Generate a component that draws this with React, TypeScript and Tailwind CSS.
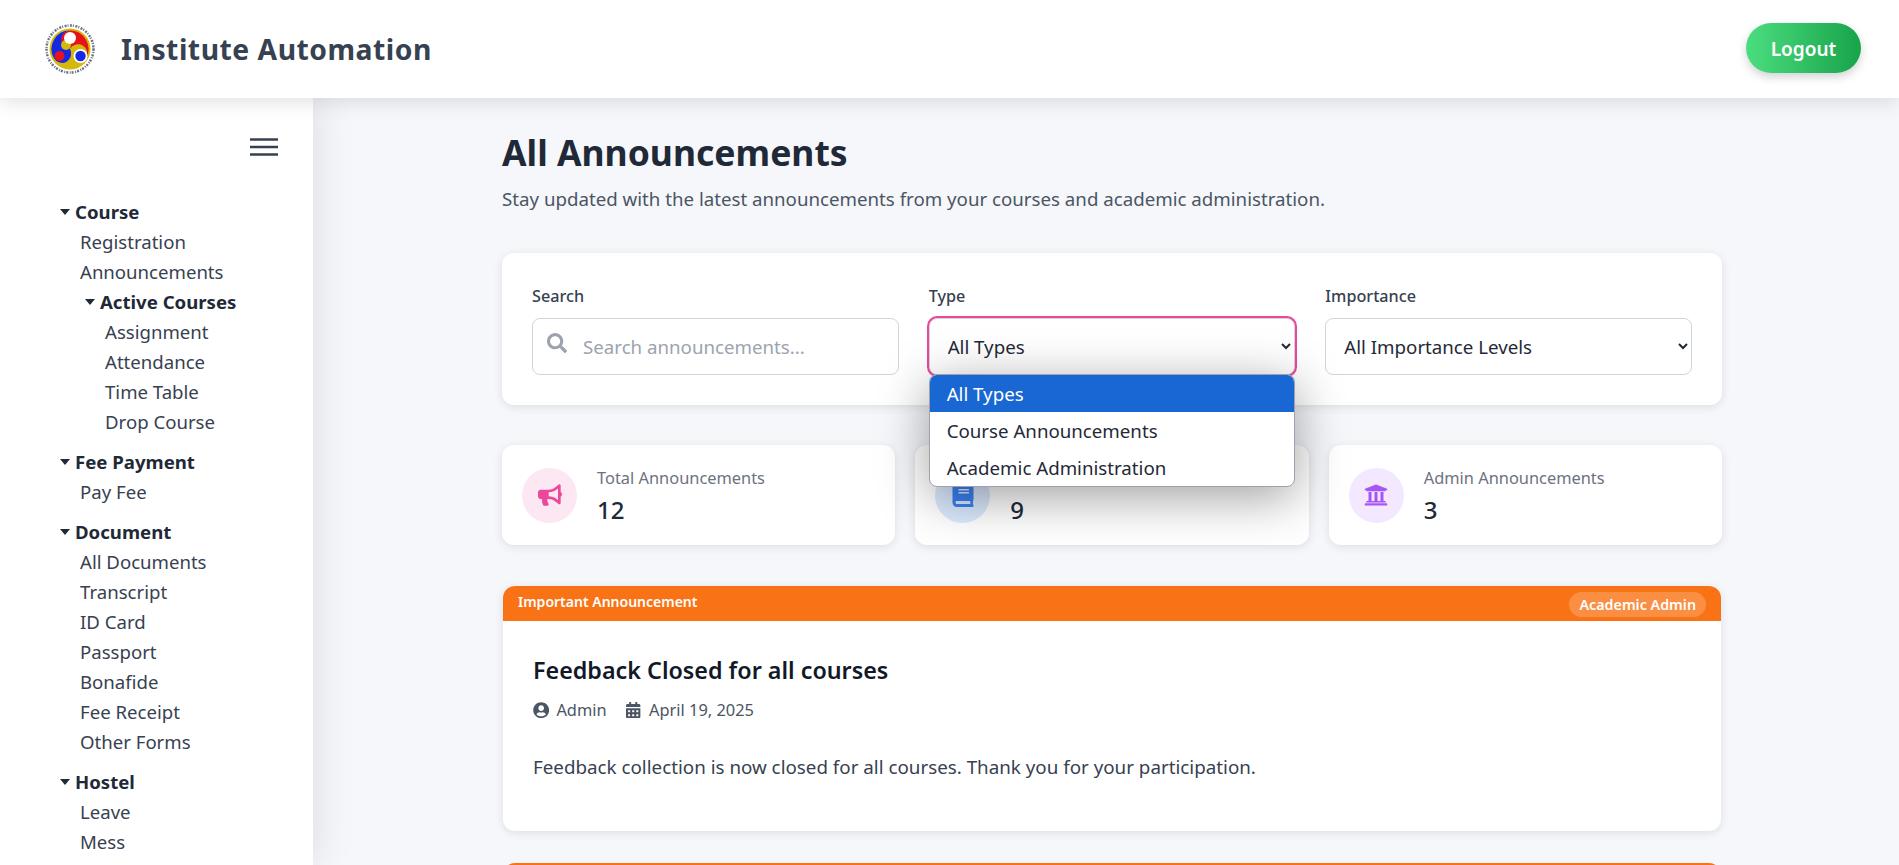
import { FaBook, FaBullhorn, FaCalendarAlt, FaSearch, FaUniversity, FaUserCircle } from 'react-icons/fa';

const fieldClass =
  'h-[57px] w-full rounded-lg border border-[#d1d5db] bg-white pl-[14px] pr-1 text-[18.7px] text-[#1f2937] outline-none';

const labelClass = 'mb-[9px] block text-[16.2px] font-medium leading-[26px] text-[#374151]';

const Caret = () => (
  <svg width="10" height="6" viewBox="0 0 10 6" className="shrink-0 fill-[#1f2937]">
    <path d="M0 0h10L5 6z" />
  </svg>
);

const blade = 'M0-18.500A18.500 18.500 0 0 1 16-9.250 18.500 18.500 0 0 1 16 9.250A9.250 9.250 0 0 0 0 0A9.250 9.250 0 0 1 0-18.500Z';

const Logo = () => (
  <svg width="50" height="52" viewBox="-25 -26 50 52">
    <circle r="23.500" fill="#fff" stroke="#6b7280" strokeWidth="2.500" strokeDasharray="2 1 1 1.500" />
    <circle r="20.500" fill="#d4b90c" />
    <path d={blade} fill="#e8121a" />
    <path d={blade} fill="#d4b90c" transform="rotate(120)" />
    <path d={blade} fill="#1428e6" transform="rotate(240)" />
    <circle cx="-4" cy="-4" r="5" fill="#d4b90c" />
    <circle cy="-11" r="6" fill="#fff" />
    <circle cx="-10.500" cy="7" r="5" fill="#e8121a" />
    <circle cx="10.500" cy="7" r="7" fill="#fff" />
    <circle cx="10.500" cy="7" r="5.200" fill="#1428e6" />
  </svg>
);

const menu = [
  { title: 'Course', items: ['Registration', 'Announcements'], sub: { title: 'Active Courses', items: ['Assignment', 'Attendance', 'Time Table', 'Drop Course'] } },
  { title: 'Fee Payment', items: ['Pay Fee'] },
  { title: 'Document', items: ['All Documents', 'Transcript', 'ID Card', 'Passport', 'Bonafide', 'Fee Receipt', 'Other Forms'] },
  { title: 'Hostel', items: ['Leave', 'Mess', 'Transfer'] },
];

const Sidebar = () => (
  <aside className="relative z-10 w-[313px] shrink-0 bg-white pl-[60px] shadow-[0_0_40px_rgba(0,0,0,0.12)]">
    <div className="flex justify-end pr-[35px] pt-[40px]">
      <svg width="28" height="18" viewBox="0 0 28 18" className="stroke-[#374151]" strokeWidth="2.400">
        <path d="M0 1.500h28M0 9h28M0 16.500h28" />
      </svg>
    </div>
    <nav className="mt-[41px] flex flex-col gap-[10px] text-[18.6px] leading-[30px]">
      {menu.map((group) => (
        <div key={group.title}>
          <div className="flex items-center gap-[5px] font-bold text-[#1f2937]">
            <Caret />
            <span>{group.title}</span>
          </div>
          <div className="pl-[20px] text-[#374151]">
            {group.items.map((item) => (
              <div key={item}>{item}</div>
            ))}
            {group.sub && (
              <div>
                <div className="flex items-center gap-[5px] pl-[5px] font-bold text-[#1f2937]">
                  <Caret />
                  <span>{group.sub.title}</span>
                </div>
                <div className="pl-[25px]">
                  {group.sub.items.map((item) => (
                    <div key={item}>{item}</div>
                  ))}
                </div>
              </div>
            )}
          </div>
        </div>
      ))}
    </nav>
  </aside>
);

const stats = [
  { label: 'Total Announcements', value: '12', icon: <FaBullhorn />, tone: 'bg-[#fce7f3] text-[#ec4899]' },
  { label: 'Course Announcements', value: '9', icon: <FaBook />, tone: 'bg-[#dbeafe] text-[#3b82f6]' },
  { label: 'Admin Announcements', value: '3', icon: <FaUniversity />, tone: 'bg-[#f3e8ff] text-[#a855f7]' },
];

const TypeDropdown = () => (
  <div className="absolute left-0 top-[56px] z-20 w-[366px] overflow-hidden rounded-lg border border-[#9ca3af] bg-white text-[18.7px] leading-[37px] text-[#1f2937] shadow-[0_10px_50px_rgba(0,0,0,0.38)]">
    <div className="bg-[#1967d2] pl-[17px] text-white">All Types</div>
    <div className="pl-[17px]">Course Announcements</div>
    <div className="pl-[17px]">Academic Administration</div>
  </div>
);

export default function App() {
  return (
    <div className="flex h-[865px] flex-col overflow-hidden bg-[#f5f7fb] font-['Noto_Sans','Open_Sans',sans-serif]">
      <header className="relative z-20 flex h-[98px] shrink-0 items-center justify-between bg-white pl-[45px] pr-[38px] shadow-[0_4px_20px_rgba(0,0,0,0.12)]">
        <div className="flex items-center gap-[26px]">
          <Logo />
          <h1 className="text-[28.3px] font-bold tracking-[0.5px] text-[#374151]">Institute Automation</h1>
        </div>
        <button className="-mt-[2px] h-[50px] w-[115px] rounded-full bg-gradient-to-r from-[#4ade80] to-[#16a34a] pt-[2px] text-[19px] font-semibold text-white shadow-[0_4px_10px_rgba(0,0,0,0.18)]">
          Logout
        </button>
      </header>

      <div className="flex min-h-0 flex-1">
        <Sidebar />
        <main className="min-w-0 flex-1 pl-[189px] pt-[27px]">
          <div className="w-[1220px]">
            <h2 className="text-[35.5px] font-bold leading-[54px] text-[#1f2937]">All Announcements</h2>
            <p className="mt-[7px] text-[18.7px] leading-[26px] text-[#4b5563]">
              Stay updated with the latest announcements from your courses and academic administration.
            </p>

            <section className="mt-[41px] grid grid-cols-3 gap-[30px] rounded-xl bg-white p-[30px] shadow-[0_2px_10px_rgba(0,0,0,0.1)]">
              <div>
                <label className={labelClass}>Search</label>
                <div className="relative">
                  <FaSearch className="absolute left-[15px] top-[15px] text-[20px] text-[#9ca3af]" />
                  <input placeholder="Search announcements..." className={`${fieldClass} pl-[50px] placeholder:text-[#9ca3af]`} />
                </div>
              </div>
              <div>
                <label className={labelClass}>Type</label>
                <div className="relative">
                  <select className={`${fieldClass} ring-2 ring-[#ec4899]`}>
                    <option>All Types</option>
                  </select>
                  <TypeDropdown />
                </div>
              </div>
              <div>
                <label className={labelClass}>Importance</label>
                <select className={fieldClass}>
                  <option>All Importance Levels</option>
                </select>
              </div>
            </section>

            <section className="mt-[40px] grid grid-cols-3 gap-[20px]">
              {stats.map((stat) => (
                <div key={stat.label} className="flex h-[100px] items-center gap-[20px] rounded-xl bg-white px-[20px] shadow-[0_2px_10px_rgba(0,0,0,0.1)]">
                  <div className={`flex h-[55px] w-[55px] items-center justify-center rounded-full text-[24px] ${stat.tone}`}>{stat.icon}</div>
                  <div className="pt-[4px]">
                    <p className="text-[16.4px] leading-[26px] text-[#6b7280]">{stat.label}</p>
                    <p className="text-[24px] font-medium leading-[38px] text-[#1f2937]">{stat.value}</p>
                  </div>
                </div>
              ))}
            </section>

            <article className="mx-px mt-[41px] overflow-hidden rounded-xl bg-white shadow-[0_2px_10px_rgba(0,0,0,0.1)]">
              <div className="flex h-[35px] items-center justify-between bg-[#f97316] pl-[15px] pr-[15px] text-white">
                <span className="-mt-[4px] text-[14px] font-semibold">Important Announcement</span>
                <span className="mt-[1px] rounded-full bg-white/20 px-[10px] text-[14.3px] font-semibold leading-[25px]">Academic Admin</span>
              </div>
              <div className="h-[210px] px-[30px] pt-[31px]">
                <h3 className="text-[23.3px] font-semibold leading-[36px] text-[#111827]">Feedback Closed for all courses</h3>
                <div className="mt-[10px] flex items-center gap-[18px] text-[16.4px] leading-[24px] text-[#4b5563]">
                  <span className="flex items-center gap-[7px]">
                    <FaUserCircle /> Admin
                  </span>
                  <span className="flex items-center gap-[8px]">
                    <FaCalendarAlt /> April 19, 2025
                  </span>
                </div>
                <p className="mt-[32px] text-[18.8px] leading-[26px] text-[#374151]">
                  Feedback collection is now closed for all courses. Thank you for your participation.
                </p>
              </div>
            </article>

            <div className="mx-px mt-[32px] h-[35px] rounded-t-xl bg-[#f97316]" />
          </div>
        </main>
      </div>
    </div>
  );
}
